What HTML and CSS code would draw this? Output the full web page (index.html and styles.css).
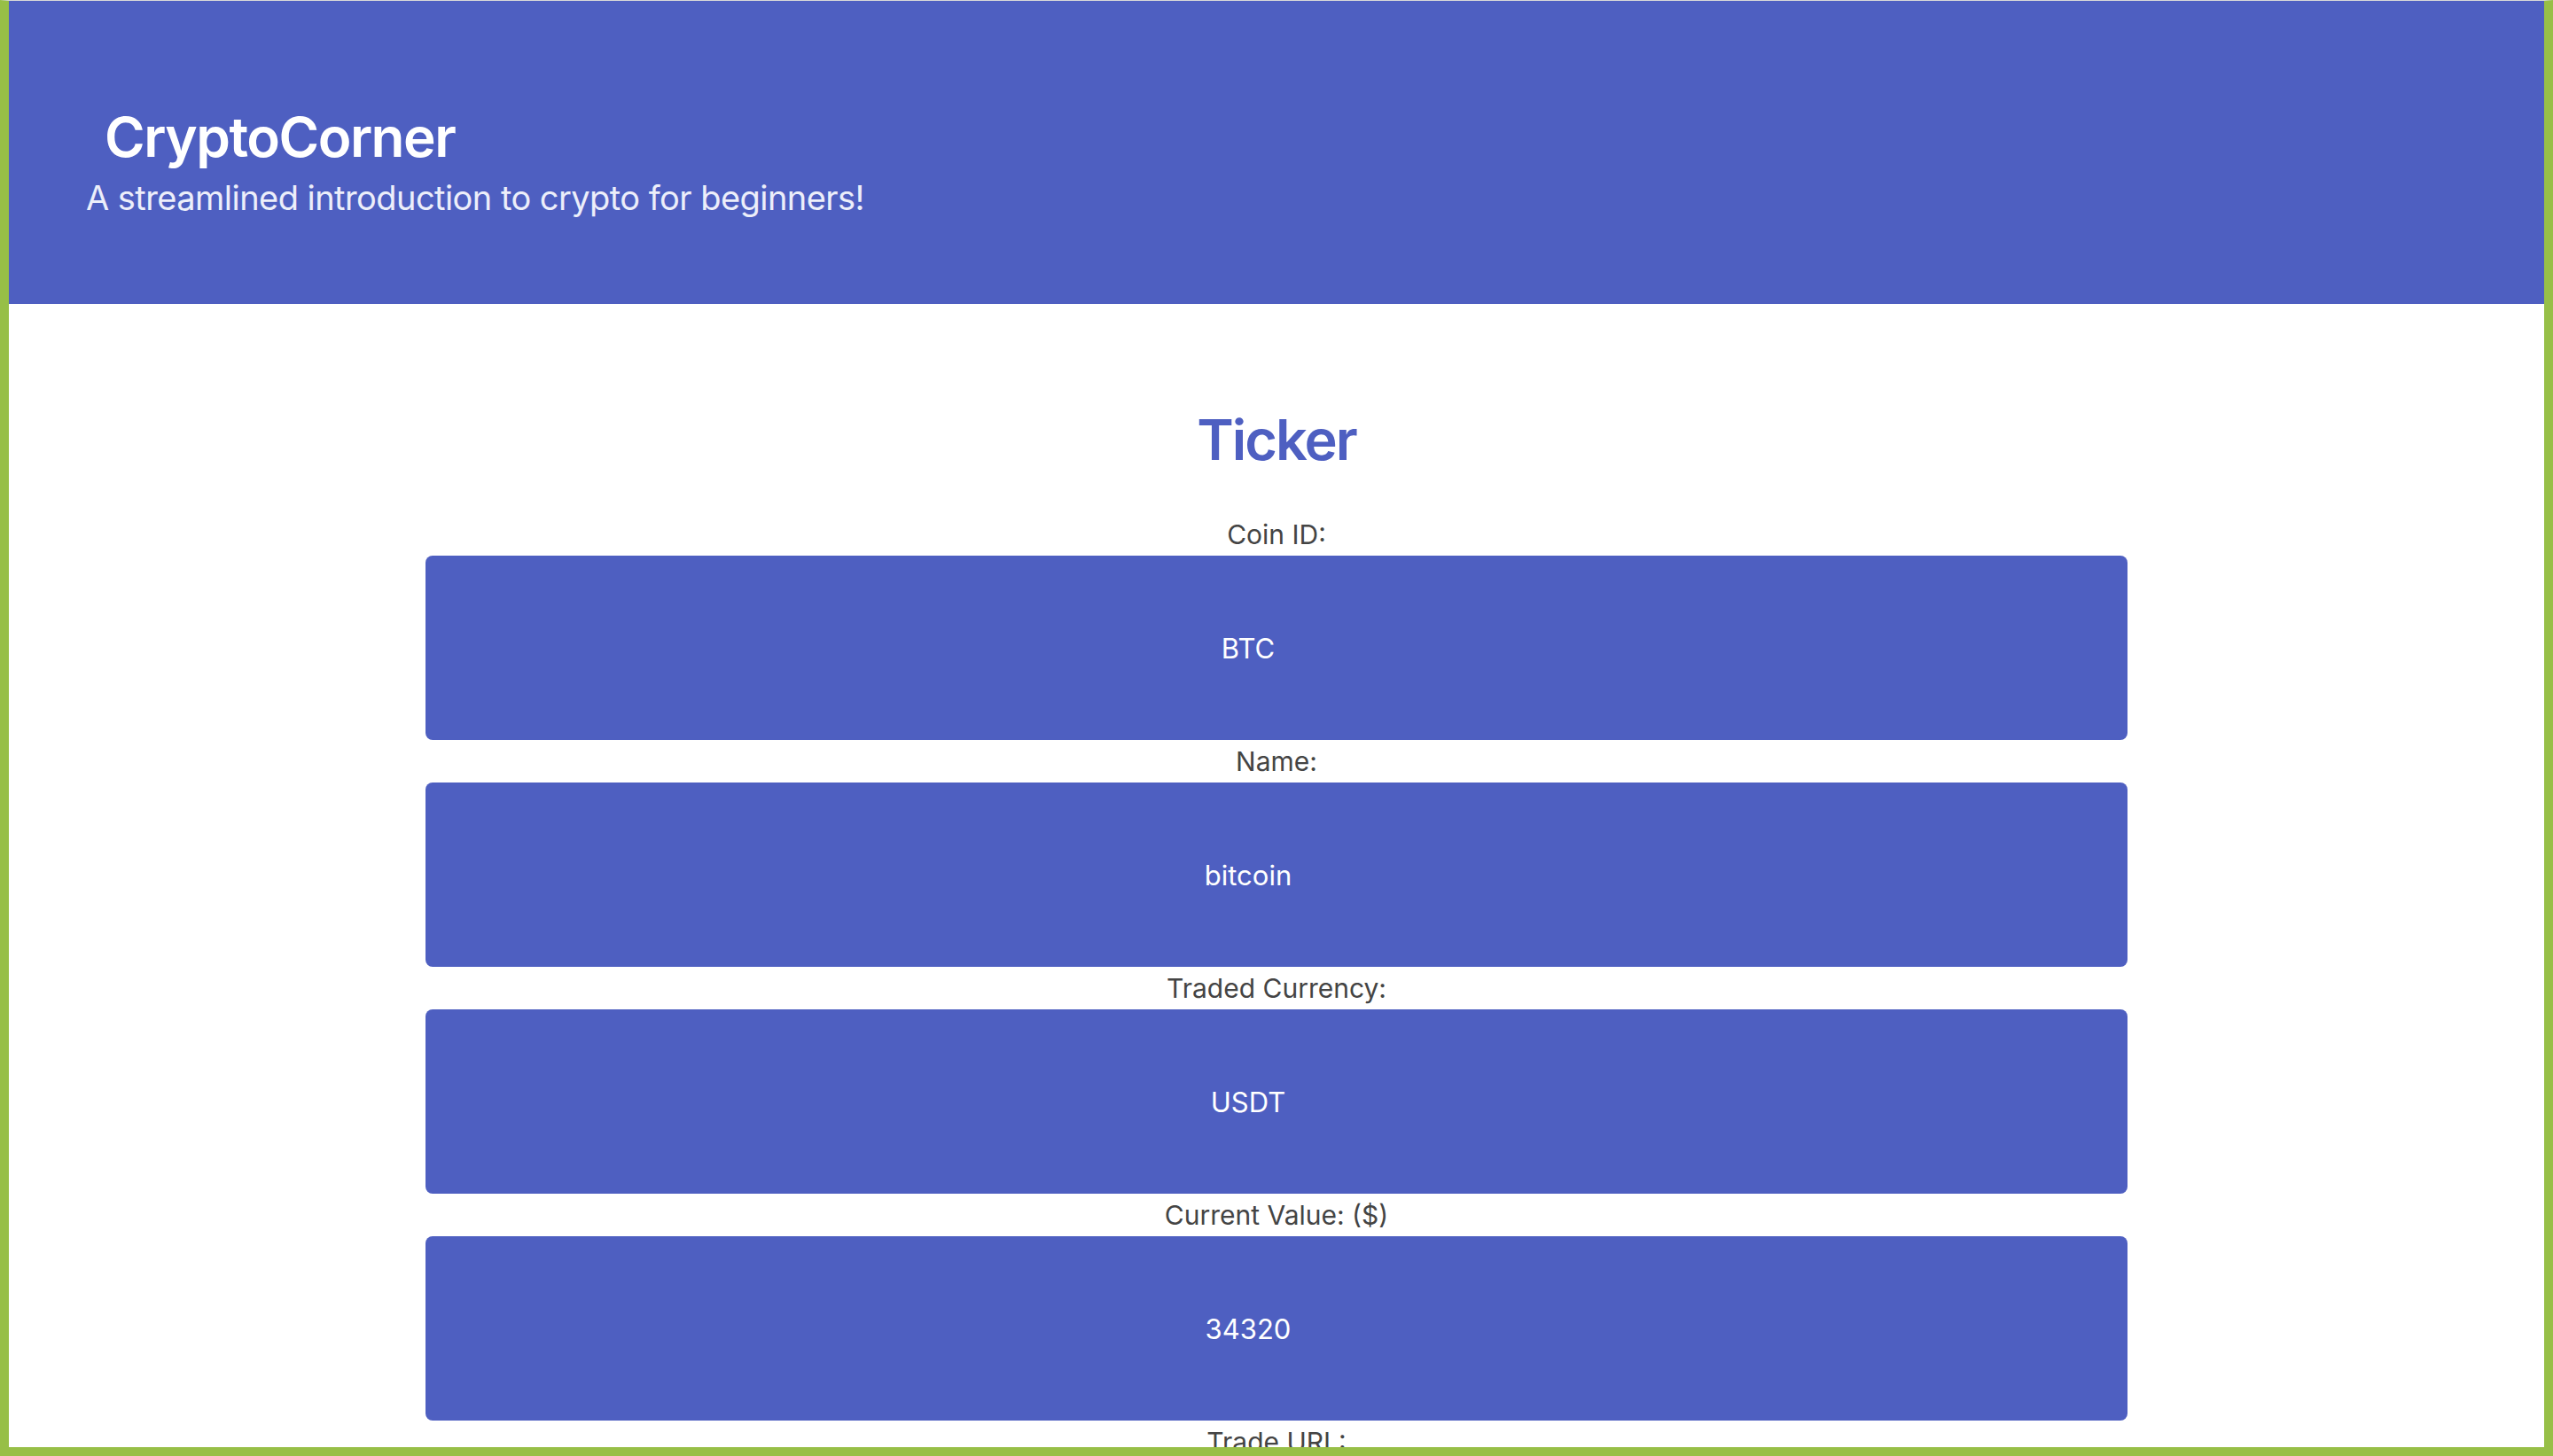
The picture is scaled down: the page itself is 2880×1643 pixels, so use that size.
FILE: index.html
```html
<!DOCTYPE html>
<html lang="en">
<head>
<meta charset="utf-8">
<title>CryptoCorner</title>
<link rel="stylesheet" href="styles.css">
</head>
<body>
<div class="frame">
  <header class="hero">
    <h1 class="hero-title">CryptoCorner</h1>
    <p class="hero-sub">A streamlined introduction to crypto for beginners!</p>
  </header>
  <main class="ticker">
    <h2 class="ticker-title">Ticker</h2>
    <div class="field">
      <div class="field-label">Coin ID:</div>
      <div class="field-box">BTC</div>
    </div>
    <div class="field">
      <div class="field-label">Name:</div>
      <div class="field-box">bitcoin</div>
    </div>
    <div class="field">
      <div class="field-label">Traded Currency:</div>
      <div class="field-box">USDT</div>
    </div>
    <div class="field">
      <div class="field-label">Current Value: ($)</div>
      <div class="field-box">34320</div>
    </div>
    <div class="field">
      <div class="field-label">Trade URL:</div>
      <div class="field-box">https://www.binance.com/en/trade/BTC_USDT</div>
    </div>
  </main>
</div>
</body>
</html>
```

FILE: styles.css
```css
html, body {
  margin: 0;
  padding: 0;
  height: 100%;
  overflow: hidden;
  background: #ffffff;
}

body {
  font-family: Inter, "Noto Sans", "Liberation Sans", sans-serif;
}

.frame {
  box-sizing: border-box;
  height: 1643px;
  border-left: 10px solid #97bf47;
  border-right: 10px solid #97bf47;
  border-bottom: 10px solid #97bf47;
  border-top: 1px solid #d9d9d9;
  overflow: hidden;
  display: flex;
  flex-direction: column;
}

.hero {
  flex: none;
  height: 342px;
  box-sizing: border-box;
  background: #4e5fc1;
  padding: 116px 0 0 87px;
}

.hero-title {
  margin: 0 0 8px 21px;
  font-size: 62px;
  line-height: 75px;
  font-weight: 600;
  color: #ffffff;
  letter-spacing: -1.5px;
}

.hero-sub {
  margin: 0;
  font-size: 38px;
  line-height: 46px;
  font-weight: 400;
  color: #eceefa;
  letter-spacing: -0.55px;
}

.ticker {
  display: flex;
  flex-direction: column;
  align-items: center;
  padding-top: 115px;
}

.ticker-title {
  margin: 0 0 45px;
  font-size: 63px;
  line-height: 76px;
  font-weight: 600;
  color: #4e5fc1;
  letter-spacing: -2px;
}

.field {
  width: 1920px;
  display: flex;
  flex-direction: column;
  align-items: stretch;
}

.field-label {
  text-align: center;
  font-size: 30px;
  line-height: 48px;
  color: #444444;
}

.field-box {
  height: 208px;
  box-sizing: border-box;
  background: #4e5fc1;
  border-radius: 8px;
  color: #ffffff;
  font-size: 31px;
  display: flex;
  align-items: center;
  justify-content: center;
  padding-right: 64px;
}
```
